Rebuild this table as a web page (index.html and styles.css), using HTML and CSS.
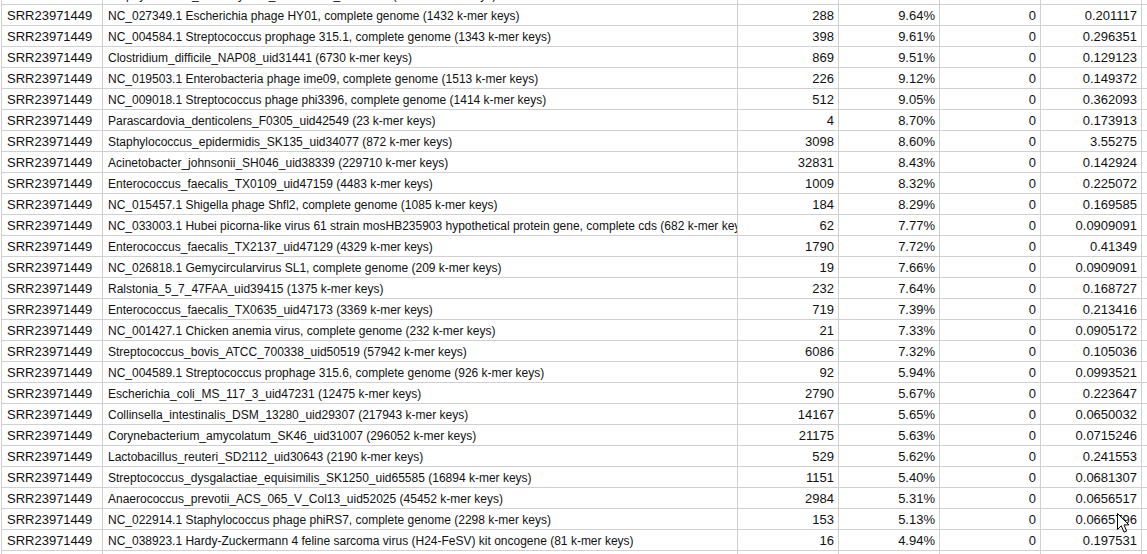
FILE: index.html
```html
<!DOCTYPE html>
<html>
<head>
<meta charset="utf-8">
<link rel="stylesheet" href="styles.css">
</head>
<body>
<div class="sheet">
  <div class="grid">
    <div class="c a">SRR23971449</div><div class="c t">Staphylococcus_haemolyticus_JCSC1435_uid58851 (14832 k-mer keys)</div><div class="c n"></div><div class="c n"></div><div class="c n"></div><div class="c n"></div><div class="c x"></div>

    <div class="c a">SRR23971449</div><div class="c t">NC_027349.1 Escherichia phage HY01, complete genome (1432 k-mer keys)</div><div class="c n">288</div><div class="c n">9.64%</div><div class="c n">0</div><div class="c n">0.201117</div><div class="c x"></div>
    <div class="c a">SRR23971449</div><div class="c t">NC_004584.1 Streptococcus prophage 315.1, complete genome (1343 k-mer keys)</div><div class="c n">398</div><div class="c n">9.61%</div><div class="c n">0</div><div class="c n">0.296351</div><div class="c x"></div>
    <div class="c a">SRR23971449</div><div class="c t">Clostridium_difficile_NAP08_uid31441 (6730 k-mer keys)</div><div class="c n">869</div><div class="c n">9.51%</div><div class="c n">0</div><div class="c n">0.129123</div><div class="c x"></div>
    <div class="c a">SRR23971449</div><div class="c t">NC_019503.1 Enterobacteria phage ime09, complete genome (1513 k-mer keys)</div><div class="c n">226</div><div class="c n">9.12%</div><div class="c n">0</div><div class="c n">0.149372</div><div class="c x"></div>
    <div class="c a">SRR23971449</div><div class="c t">NC_009018.1 Streptococcus phage phi3396, complete genome (1414 k-mer keys)</div><div class="c n">512</div><div class="c n">9.05%</div><div class="c n">0</div><div class="c n">0.362093</div><div class="c x"></div>
    <div class="c a">SRR23971449</div><div class="c t">Parascardovia_denticolens_F0305_uid42549 (23 k-mer keys)</div><div class="c n">4</div><div class="c n">8.70%</div><div class="c n">0</div><div class="c n">0.173913</div><div class="c x"></div>
    <div class="c a">SRR23971449</div><div class="c t">Staphylococcus_epidermidis_SK135_uid34077 (872 k-mer keys)</div><div class="c n">3098</div><div class="c n">8.60%</div><div class="c n">0</div><div class="c n">3.55275</div><div class="c x"></div>
    <div class="c a">SRR23971449</div><div class="c t">Acinetobacter_johnsonii_SH046_uid38339 (229710 k-mer keys)</div><div class="c n">32831</div><div class="c n">8.43%</div><div class="c n">0</div><div class="c n">0.142924</div><div class="c x"></div>
    <div class="c a">SRR23971449</div><div class="c t">Enterococcus_faecalis_TX0109_uid47159 (4483 k-mer keys)</div><div class="c n">1009</div><div class="c n">8.32%</div><div class="c n">0</div><div class="c n">0.225072</div><div class="c x"></div>
    <div class="c a">SRR23971449</div><div class="c t">NC_015457.1 Shigella phage Shfl2, complete genome (1085 k-mer keys)</div><div class="c n">184</div><div class="c n">8.29%</div><div class="c n">0</div><div class="c n">0.169585</div><div class="c x"></div>
    <div class="c a">SRR23971449</div><div class="c t">NC_033003.1 Hubei picorna-like virus 61 strain mosHB235903 hypothetical protein gene, complete cds (682 k-mer keys)</div><div class="c n">62</div><div class="c n">7.77%</div><div class="c n">0</div><div class="c n">0.0909091</div><div class="c x"></div>
    <div class="c a">SRR23971449</div><div class="c t">Enterococcus_faecalis_TX2137_uid47129 (4329 k-mer keys)</div><div class="c n">1790</div><div class="c n">7.72%</div><div class="c n">0</div><div class="c n">0.41349</div><div class="c x"></div>
    <div class="c a">SRR23971449</div><div class="c t">NC_026818.1 Gemycircularvirus SL1, complete genome (209 k-mer keys)</div><div class="c n">19</div><div class="c n">7.66%</div><div class="c n">0</div><div class="c n">0.0909091</div><div class="c x"></div>
    <div class="c a">SRR23971449</div><div class="c t">Ralstonia_5_7_47FAA_uid39415 (1375 k-mer keys)</div><div class="c n">232</div><div class="c n">7.64%</div><div class="c n">0</div><div class="c n">0.168727</div><div class="c x"></div>
    <div class="c a">SRR23971449</div><div class="c t">Enterococcus_faecalis_TX0635_uid47173 (3369 k-mer keys)</div><div class="c n">719</div><div class="c n">7.39%</div><div class="c n">0</div><div class="c n">0.213416</div><div class="c x"></div>
    <div class="c a">SRR23971449</div><div class="c t">NC_001427.1 Chicken anemia virus, complete genome (232 k-mer keys)</div><div class="c n">21</div><div class="c n">7.33%</div><div class="c n">0</div><div class="c n">0.0905172</div><div class="c x"></div>
    <div class="c a">SRR23971449</div><div class="c t">Streptococcus_bovis_ATCC_700338_uid50519 (57942 k-mer keys)</div><div class="c n">6086</div><div class="c n">7.32%</div><div class="c n">0</div><div class="c n">0.105036</div><div class="c x"></div>
    <div class="c a">SRR23971449</div><div class="c t">NC_004589.1 Streptococcus prophage 315.6, complete genome (926 k-mer keys)</div><div class="c n">92</div><div class="c n">5.94%</div><div class="c n">0</div><div class="c n">0.0993521</div><div class="c x"></div>
    <div class="c a">SRR23971449</div><div class="c t">Escherichia_coli_MS_117_3_uid47231 (12475 k-mer keys)</div><div class="c n">2790</div><div class="c n">5.67%</div><div class="c n">0</div><div class="c n">0.223647</div><div class="c x"></div>
    <div class="c a">SRR23971449</div><div class="c t">Collinsella_intestinalis_DSM_13280_uid29307 (217943 k-mer keys)</div><div class="c n">14167</div><div class="c n">5.65%</div><div class="c n">0</div><div class="c n">0.0650032</div><div class="c x"></div>
    <div class="c a">SRR23971449</div><div class="c t">Corynebacterium_amycolatum_SK46_uid31007 (296052 k-mer keys)</div><div class="c n">21175</div><div class="c n">5.63%</div><div class="c n">0</div><div class="c n">0.0715246</div><div class="c x"></div>
    <div class="c a">SRR23971449</div><div class="c t">Lactobacillus_reuteri_SD2112_uid30643 (2190 k-mer keys)</div><div class="c n">529</div><div class="c n">5.62%</div><div class="c n">0</div><div class="c n">0.241553</div><div class="c x"></div>
    <div class="c a">SRR23971449</div><div class="c t">Streptococcus_dysgalactiae_equisimilis_SK1250_uid65585 (16894 k-mer keys)</div><div class="c n">1151</div><div class="c n">5.40%</div><div class="c n">0</div><div class="c n">0.0681307</div><div class="c x"></div>
    <div class="c a">SRR23971449</div><div class="c t">Anaerococcus_prevotii_ACS_065_V_Col13_uid52025 (45452 k-mer keys)</div><div class="c n">2984</div><div class="c n">5.31%</div><div class="c n">0</div><div class="c n">0.0656517</div><div class="c x"></div>
    <div class="c a">SRR23971449</div><div class="c t">NC_022914.1 Staphylococcus phage phiRS7, complete genome (2298 k-mer keys)</div><div class="c n">153</div><div class="c n">5.13%</div><div class="c n">0</div><div class="c n">0.0665796</div><div class="c x"></div>
    <div class="c a">SRR23971449</div><div class="c t">NC_038923.1 Hardy-Zuckermann 4 feline sarcoma virus (H24-FeSV) kit oncogene (81 k-mer keys)</div><div class="c n">16</div><div class="c n">4.94%</div><div class="c n">0</div><div class="c n">0.197531</div><div class="c x"></div>

    <div class="c a"></div><div class="c t"></div><div class="c n"></div><div class="c n"></div><div class="c n"></div><div class="c n"></div><div class="c x"></div>
  </div>
  <svg class="cursor" width="13" height="21" viewBox="0 0 13 21">
    <path d="M0.5 0.5 L0.5 16.5 L4.3 12.8 L7 19.2 L9.6 18.1 L7 11.9 L12 11.9 Z" fill="#fff" stroke="#000" stroke-width="1" stroke-linejoin="round"/>
  </svg>
</div>
</body>
</html>
```

FILE: styles.css
```css
html, body {
  margin: 0;
  padding: 0;
  background: #ffffff;
}

.sheet {
  position: relative;
  width: 1147px;
  height: 554px;
  overflow: hidden;
  padding-left: 1px;
  box-sizing: border-box;
}

.grid {
  display: grid;
  grid-template-columns: 101px 635px 101px 101px 101px 101px 120px;
  grid-auto-rows: 21px;
  margin-top: -16px;
  border-left: 1px solid #d0d0d0;
  width: max-content;
  font-family: "Liberation Sans", Arial, sans-serif;
  font-size: 13px;
  color: #111;
}

.c {
  box-sizing: border-box;
  border-right: 1px solid #d0d0d0;
  border-bottom: 1px solid #d0d0d0;
  padding: 2px 4px 0 5px;
  line-height: 18px;
  white-space: nowrap;
  overflow: hidden;
}

.t {
  font-size: 12px;
}

.n {
  text-align: right;
}

.x {
  border-right: none;
}

.cursor {
  position: absolute;
  left: 1117px;
  top: 513px;
}
```
